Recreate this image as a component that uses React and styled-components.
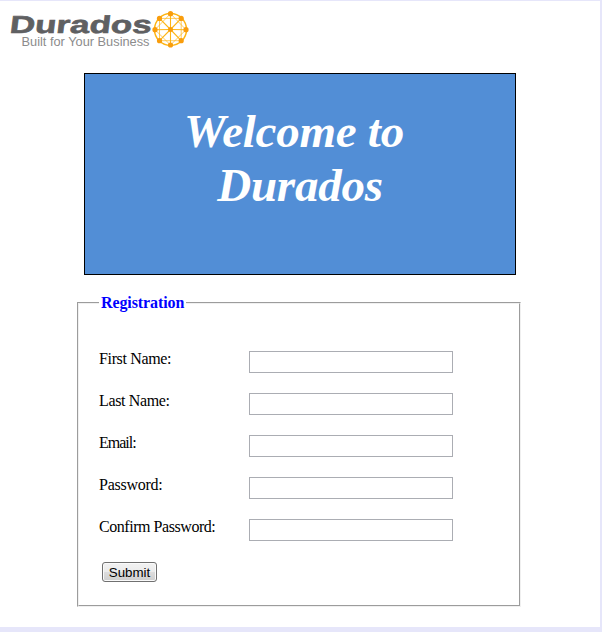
import React from "react";
import styled, { createGlobalStyle } from "styled-components";

const GlobalStyle = createGlobalStyle`
  * { box-sizing: border-box; }
  body { margin: 0; background: #e6e6fa; }
`;

const Page = styled.main`
  width: 600px;
  height: 626px;
  margin: 1px 2px 5px 0;
  overflow: hidden;
  background: #fff;
  color: #000;
  font: 16px/18px "Liberation Serif", "Times New Roman", serif;
`;

const LogoImage = styled.svg`
  display: block;
  width: 200px;
  height: 72px;
`;

const Wordmark = styled.text`
  font: bold 24px "Liberation Sans", Arial, sans-serif;
  fill: #5f6062;
  stroke: #5f6062;
  stroke-width: 0.6;
`;

const Tagline = styled.text`
  font: 12px "Liberation Sans", Arial, sans-serif;
  fill: #8c8c8c;
`;

const Banner = styled.header`
  width: 432px;
  height: 202px;
  margin-left: 84px;
  padding-top: 30px;
  border: 1px solid #000;
  background: #528ed6;
`;

const Title = styled.h1`
  margin: 0;
  color: #fff;
  text-align: center;
  font-size: 47px;
  font-style: italic;
  font-weight: bold;
  line-height: 54px;
  letter-spacing: -0.25px;
`;

const TitleLine = styled.span`
  display: block;
  padding-right: ${(p) => p.$inset}px;
`;

const Panel = styled.fieldset`
  width: 444px;
  height: 313px;
  margin: 19px 0 0 77px;
  padding: 0 20px;
  border: 2px groove #f0f0f0;
`;

const Legend = styled.legend`
  padding: 0 2px;
  color: #0000ff;
  font-weight: bold;
  letter-spacing: -0.1px;
`;

const Fields = styled.div`
  display: grid;
  gap: 20px;
  padding-top: 39px;
`;

const Field = styled.label`
  display: grid;
  grid-template-columns: 150px 204px;
  align-items: start;
  height: 22px;
`;

const Caption = styled.span`
  line-height: 16px;
  letter-spacing: ${(p) => p.$spacing}px;
`;

const Input = styled.input`
  width: 204px;
  height: 22px;
  margin: 0;
  padding: 1px 3px;
  border: 1px solid #abadb3;
  border-radius: 0;
  background: #fff;
  outline: none;
`;

const Submit = styled.button`
  display: block;
  width: 55px;
  height: 20px;
  margin: 21px 0 0 3px;
  padding: 1px 0 0;
  border: 1px solid #707070;
  border-radius: 3px;
  background: linear-gradient(#f2f2f2 0%, #ebebeb 50%, #dddddd 50%, #cfcfcf 100%);
  box-shadow: inset 0 0 0 1px #fafafa;
  color: #000;
  font: 13.33px/17px "Liberation Sans", Arial, sans-serif;
`;

const NODES = [
  [170.5, 13.7], [181.2, 18.4], [186, 29.7], [181.2, 40.7],
  [170.5, 45], [159.5, 40.7], [155, 29.7], [159.5, 18.4],
];

function Logo() {
  return (
    <LogoImage viewBox="0 1 200 72" role="img" aria-label="Durados">
      <Wordmark transform="translate(9 33) skewX(-7) scale(1.455 1.02)" textLength="97.5" lengthAdjust="spacingAndGlyphs">
        Durados
      </Wordmark>
      <Tagline x="21.5" y="45.5" textLength="128" lengthAdjust="spacingAndGlyphs">
        Built for Your Business
      </Tagline>
      <g fill="none" stroke="#fdb515" strokeWidth="1.1">
        <circle cx="170.5" cy="29.5" r="16" strokeWidth="1.5" />
        {NODES.map(([x, y], i) => {
          const [nx, ny] = NODES[(i + 2) % 8];
          return (
            <React.Fragment key={i}>
              <path d={`M170.5 29.5L${x} ${y}`} />
              <path d={`M${x} ${y}L${nx} ${ny}`} strokeWidth="0.7" />
            </React.Fragment>
          );
        })}
      </g>
      <g fill="#f99d0c">
        <circle cx="170.5" cy="29.5" r="2.5" />
        {NODES.map(([x, y]) => <circle key={`${x}-${y}`} cx={x} cy={y} r="2.6" />)}
      </g>
    </LogoImage>
  );
}

const FIELDS = [
  ["First Name:", "text", -0.35],
  ["Last Name:", "text", -0.35],
  ["Email:", "email", -1],
  ["Password:", "password", -0.25],
  ["Confirm Password:", "password", -0.45],
];

export default function App() {
  return (
    <>
      <GlobalStyle />
      <Page>
        <Logo />
        <Banner>
          <Title>
            <TitleLine $inset={12}>Welcome to</TitleLine>
            <TitleLine $inset={0}>Durados</TitleLine>
          </Title>
        </Banner>
        <form>
          <Panel>
            <Legend>Registration</Legend>
            <Fields>
              {FIELDS.map(([name, type, spacing]) => (
                <Field key={name}>
                  <Caption $spacing={spacing}>{name}</Caption>
                  <Input type={type} />
                </Field>
              ))}
            </Fields>
            <Submit type="button">Submit</Submit>
          </Panel>
        </form>
      </Page>
    </>
  );
}
